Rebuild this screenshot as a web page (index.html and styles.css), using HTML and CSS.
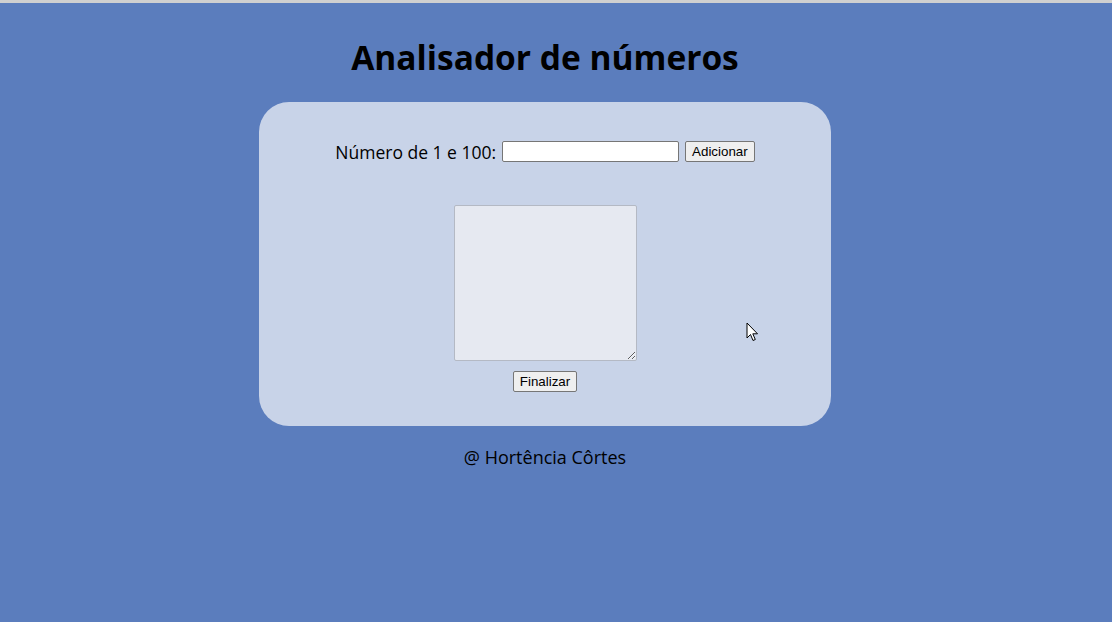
FILE: index.html
```html
<!DOCTYPE html>
<html lang="pt-BR">
<head>
<meta charset="utf-8">
<title>Analisador de números</title>
<link rel="stylesheet" href="styles.css">
</head>
<body>
<div class="topline"></div>
<div class="page">
  <h1 class="title">Analisador de números</h1>
  <section class="card">
    <div class="row">
      <label class="label" for="num">Número de 1 e 100:</label>
      <input class="field" id="num" type="number">
      <button class="btn" type="button">Adicionar</button>
    </div>
    <textarea class="list"></textarea>
    <button class="btn" type="button">Finalizar</button>
  </section>
  <footer class="footer">@ Hortência Côrtes</footer>
</div>
<svg class="cursor" width="14" height="22" viewBox="0 0 14 22">
  <path d="M1 1 L1 16 L4.5 12.5 L7 18.5 L9.3 17.5 L6.8 11.8 L11.5 11.8 Z" fill="#fff" stroke="#000" stroke-width="1" stroke-linejoin="miter"/>
</svg>
</body>
</html>
```
FILE: styles.css
```css
html, body {
  margin: 0;
  padding: 0;
}
body {
  background: #5b7dbd;
  font-family: "Comic Sans MS", "Open Sans", sans-serif;
  color: #000;
  min-height: 622px;
  position: relative;
}
.topline {
  height: 3px;
  background: #d0d0d0;
}
.page {
  width: 1090px;
  display: flex;
  flex-direction: column;
  align-items: center;
}
.title {
  margin: 30px 0 0;
  font-size: 33.5px;
  line-height: 48px;
  font-weight: 700;
}
.card {
  margin-top: 21px;
  width: 572px;
  height: 324px;
  box-sizing: border-box;
  background: #c8d3e8;
  border-radius: 30px;
  display: flex;
  flex-direction: column;
  align-items: center;
  padding-top: 39px;
}
.row {
  display: flex;
  align-items: center;
  height: 21px;
}
.label {
  font-size: 17.5px;
  margin-right: 6px;
}
.field {
  width: 177px;
  height: 21px;
  box-sizing: border-box;
  border: 1px solid #767676;
  border-radius: 2px;
  background: #fff;
  margin: 0 6px 0 0;
  padding: 1px 2px;
  -moz-appearance: textfield;
}
.field::-webkit-inner-spin-button,
.field::-webkit-outer-spin-button {
  -webkit-appearance: none;
  margin: 0;
}
.btn {
  font-family: "Liberation Sans", Arial, sans-serif;
  font-size: 13.33px;
  height: 21px;
  padding: 1px 6px;
  border: 1px solid #767676;
  border-radius: 2px;
  background: #efefef;
  color: #000;
}
.list {
  margin: 43px 0 10px;
  width: 183px;
  height: 156px;
  box-sizing: border-box;
  background: #e6e9f1;
  border: 1px solid #b4b9c4;
  border-radius: 2px;
  resize: both;
}
.footer {
  margin-top: 19px;
  font-size: 18px;
  line-height: 24px;
}
.cursor {
  position: absolute;
  left: 746px;
  top: 322px;
}
```
